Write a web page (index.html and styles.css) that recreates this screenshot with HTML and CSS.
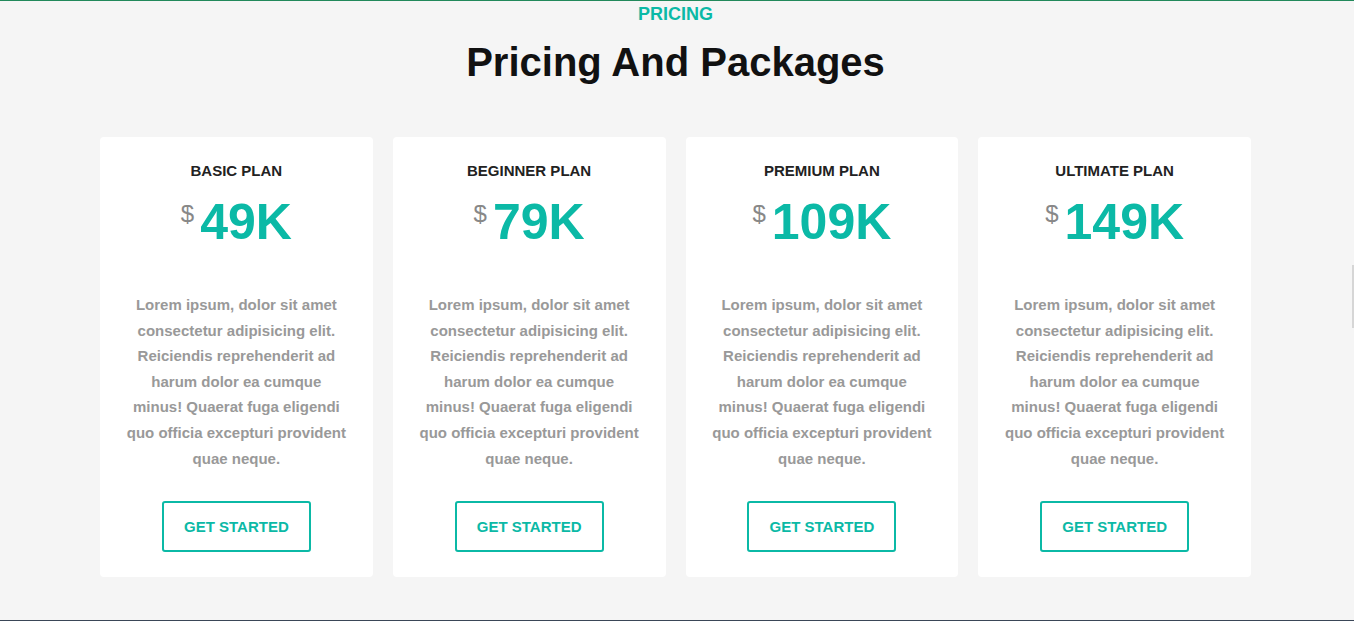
FILE: index.html
```html
<!DOCTYPE html>
<html>
<head>
<meta charset="utf-8">
<link rel="stylesheet" href="styles.css">
</head>
<body>
<section class="pricing">
  <div class="eyebrow">PRICING</div>
  <h1 class="title">Pricing And Packages</h1>
  <div class="cards">
    <div class="card">
      <h3 class="plan">BASIC PLAN</h3>
      <div class="price"><span class="cur">$</span><span class="amt">49K</span></div>
      <p class="desc">Lorem ipsum, dolor sit amet consectetur adipisicing elit. Reiciendis reprehenderit ad harum dolor ea cumque minus! Quaerat fuga eligendi quo officia excepturi provident quae neque.</p>
      <a class="btn">GET STARTED</a>
    </div>
    <div class="card">
      <h3 class="plan">BEGINNER PLAN</h3>
      <div class="price"><span class="cur">$</span><span class="amt">79K</span></div>
      <p class="desc">Lorem ipsum, dolor sit amet consectetur adipisicing elit. Reiciendis reprehenderit ad harum dolor ea cumque minus! Quaerat fuga eligendi quo officia excepturi provident quae neque.</p>
      <a class="btn">GET STARTED</a>
    </div>
    <div class="card">
      <h3 class="plan">PREMIUM PLAN</h3>
      <div class="price"><span class="cur">$</span><span class="amt">109K</span></div>
      <p class="desc">Lorem ipsum, dolor sit amet consectetur adipisicing elit. Reiciendis reprehenderit ad harum dolor ea cumque minus! Quaerat fuga eligendi quo officia excepturi provident quae neque.</p>
      <a class="btn">GET STARTED</a>
    </div>
    <div class="card">
      <h3 class="plan">ULTIMATE PLAN</h3>
      <div class="price"><span class="cur">$</span><span class="amt">149K</span></div>
      <p class="desc">Lorem ipsum, dolor sit amet consectetur adipisicing elit. Reiciendis reprehenderit ad harum dolor ea cumque minus! Quaerat fuga eligendi quo officia excepturi provident quae neque.</p>
      <a class="btn">GET STARTED</a>
    </div>
  </div>
  <div class="edge-mark"></div>
</section>
</body>
</html>
```
FILE: styles.css
```css
html, body {
  margin: 0;
  padding: 0;
  height: 100%;
  overflow: hidden;
}
body {
  background: #f5f5f5;
  font-family: "Liberation Sans", Arial, sans-serif;
}
.pricing {
  position: relative;
  box-sizing: border-box;
  height: 621px;
  padding-right: 3px;
  border-top: 1px solid #22895b;
  border-bottom: 1px solid #3a4657;
  display: flex;
  flex-direction: column;
  align-items: center;
}
.eyebrow {
  color: #0bb9a6;
  font-weight: bold;
  font-size: 18px;
  line-height: 24px;
  margin-top: 1px;
}
.title {
  margin: 12px 0 0;
  font-size: 40px;
  line-height: 48px;
  color: #111;
  font-weight: bold;
}
.cards {
  margin-top: 51px;
  display: grid;
  grid-template-columns: repeat(4, 272.75px);
  column-gap: 20px;
}
.card {
  background: #fff;
  border-radius: 4px;
  height: 440px;
  box-sizing: border-box;
  padding: 25px 26px 25px;
  display: flex;
  flex-direction: column;
  align-items: center;
}
.plan {
  margin: 0;
  font-size: 15px;
  line-height: 18px;
  color: #222;
  font-weight: bold;
}
.price {
  margin-top: 14px;
  display: flex;
  align-items: flex-start;
  gap: 6px;
}
.cur {
  color: #888;
  font-size: 24px;
  line-height: 28px;
  margin-top: 6px;
}
.amt {
  color: #0bb9a6;
  font-weight: bold;
  font-size: 50px;
  line-height: 56px;
}
.desc {
  margin: 42px 0 0;
  text-align: center;
  color: #999;
  font-weight: bold;
  font-size: 15px;
  line-height: 25.6px;
}
.btn {
  margin-top: auto;
  box-sizing: border-box;
  width: 149px;
  height: 51px;
  border: 2px solid #0bb9a6;
  border-radius: 3px;
  display: flex;
  align-items: center;
  justify-content: center;
  color: #0bb9a6;
  font-weight: bold;
  font-size: 15px;
}
.edge-mark {
  position: absolute;
  right: 0;
  top: 264px;
  width: 2px;
  height: 63px;
  background: #d6d6d6;
}
```
